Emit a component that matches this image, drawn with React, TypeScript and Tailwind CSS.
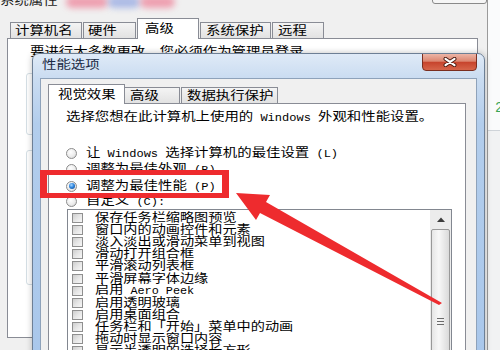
import React from "react";

const FONT = "font-['Liberation_Mono','Noto_Sans_CJK_SC',monospace]";

function Mixed({ text }: { text: string }) {
  const parts = text.split(/([\x20-\x7E]+)/).filter((p) => p.length > 0);
  return (
    <>
      {parts.map((p, i) =>
        /^[\x20-\x7E]+$/.test(p) ? (
          <span key={i} className="text-[10px]">
            {p}
          </span>
        ) : (
          <span key={i}>{p}</span>
        )
      )}
    </>
  );
}

function S({ children }: { children: React.ReactNode }) {
  return (
    <span className="inline-block origin-left translate-y-[1.4px] scale-x-[1.2] whitespace-nowrap">{children}</span>
  );
}

function Radio({ on }: { on?: boolean }) {
  return (
    <span className="flex h-[11px] w-[11px] shrink-0 items-center justify-center rounded-full border border-[#8c8c8c] bg-[radial-gradient(circle_at_40%_35%,#ffffff_0%,#ececec_55%,#cfcfcf_100%)]">
      {on && (
        <span className="h-[6px] w-[6px] rounded-full bg-[radial-gradient(circle_at_40%_35%,#a8d6ff_0%,#2f86de_45%,#0d3f82_100%)]" />
      )}
    </span>
  );
}

function Check() {
  return (
    <span className="h-[10px] w-[11px] shrink-0 border border-[#8f8f8f] bg-[linear-gradient(135deg,#cdcdcd_0%,#e6e6e6_50%,#f7f7f7_100%)]" />
  );
}

const items = [
  "保存任务栏缩略图预览",
  "窗口内的动画控件和元素",
  "淡入淡出或滑动菜单到视图",
  "滑动打开组合框",
  "平滑滚动列表框",
  "平滑屏幕字体边缘",
  "启用 Aero Peek",
  "启用透明玻璃",
  "启用桌面组合",
  "任务栏和「开始」菜单中的动画",
  "拖动时显示窗口内容",
  "显示半透明的选择长方形",
  "显示缩略图，而不是显示图标",
];

const tabOff =
  "flex h-[16px] shrink-0 items-center border border-b-0 border-[#898c95] bg-[linear-gradient(180deg,#f4f4f4,#e2e2e2)]";

export default function App() {
  return (
    <div className={`relative flex h-[350px] w-[500px] overflow-hidden bg-[#f0f0f0] text-[12px] text-black ${FONT}`}>
      {/* Back window: 系统属性 */}
      <div className="flex w-[488px] shrink-0 flex-col border-r border-[#9a9a9a]">
        <div className="flex h-[18px] shrink-0 items-start">
          <span className="mt-[-7px] leading-[16px] text-[#1d1d1d]">
            <S>系统属性</S>
          </span>
          <div className="ml-auto mt-[-10px] h-[14px] w-[55px] rounded-b-[3px] border border-[#8a8a8a] bg-[#f6f6f6]" />
        </div>
        <div className="flex h-[20px] shrink-0 items-end gap-[1px] pl-[10px] leading-[14px]">
          <div className={`${tabOff} w-[72px] pl-[4px]`}>
            <S>计算机名</S>
          </div>
          <div className={`${tabOff} w-[53px] pl-[4px]`}>
            <S>硬件</S>
          </div>
          <div className="relative z-10 mb-[-1px] flex h-[21px] w-[62px] shrink-0 items-center border border-b-0 border-[#898c95] bg-white pl-[7px]">
            <S>高级</S>
          </div>
          <div className={`${tabOff} w-[71px] pl-[5px]`}>
            <S>系统保护</S>
          </div>
          <div className={`${tabOff} w-[52px] pl-[5px]`}>
            <S>远程</S>
          </div>
        </div>
        <div className="ml-[7px] flex h-[300px] w-[471px] shrink-0 flex-col overflow-hidden border border-[#898c95] bg-white">
          <div className="shrink-0 pl-[22px] pt-[5px] leading-[16px]">
            <S>要进行大多数更改，您必须作为管理员登录。</S>
          </div>
          <div className="ml-[18px] mr-[18px] mt-[13px] h-[62px] shrink-0 rounded-[3px] border border-[#d5dfe5]" />
          <div className="ml-[18px] mr-[18px] mt-[15px] h-[135px] shrink-0 rounded-[3px] border border-[#d5dfe5]" />
        </div>
      </div>

      {/* Right edge: another window */}
      <div className="flex flex-1 flex-col bg-[#fafbfc]">
        <div className="h-[100px] shrink-0" />
        <div className="ml-[7px] h-[20px] shrink-0 text-[14px] leading-[16px] text-[#3aa657]">2</div>
        <div className="h-[10px] shrink-0" />
        <div className="flex-1 border-t border-[#cfd4d9] bg-[#f1f2f3]" />
      </div>

      {/* Watermark blur */}
      <div className="absolute left-[66px] top-[-4px] h-[12px] w-[42px] rounded-full bg-[#ee7d95] opacity-70 blur-[3px]" />
      <div className="absolute left-[108px] top-[-4px] h-[12px] w-[32px] rounded-full bg-[#7f97df] opacity-60 blur-[3px]" />
      <div className="absolute left-[140px] top-[-4px] h-[12px] w-[35px] rounded-full bg-[#ee7d95] opacity-70 blur-[3px]" />

      {/* Front dialog: 性能选项 */}
      <div className="absolute left-[32px] top-[53px] flex h-[310px] w-[453px] flex-col overflow-hidden rounded-t-[7px] border border-[#6d7f95] bg-[linear-gradient(180deg,#dfeaf7_0px,#cadcf1_24px,#b2cdec_70px,#a9c7eb_100%)] shadow-[0_0_6px_rgba(0,0,0,0.25)]">
        <div className="flex h-[24px] shrink-0 items-start">
          <span className="ml-[9px] mt-[3px] leading-[16px] text-[#1b2b45]">
            <S>性能选项</S>
          </span>
          <div className="ml-auto mr-[7px] mt-[-1px] flex h-[18px] w-[55px] items-center justify-center rounded-b-[4px] border border-[#7a2e20] bg-[linear-gradient(180deg,#ecb5a6_0%,#dc8670_45%,#c7442d_52%,#d6654a_100%)]">
            <svg width="16" height="10" viewBox="0 0 16 10">
              <path d="M3.5 1.8 L12.5 8.2 M12.5 1.8 L3.5 8.2" stroke="#4a1a10" strokeWidth="4" strokeLinecap="round" />
              <path d="M3.5 1.8 L12.5 8.2 M12.5 1.8 L3.5 8.2" stroke="#ffffff" strokeWidth="2.2" strokeLinecap="round" />
            </svg>
          </div>
        </div>
        <div className="mx-[7px] flex min-h-0 flex-1 flex-col border border-[#8ea2ba] bg-[#f0f0f0] pt-[5px]">
          <div className="flex h-[19px] shrink-0 items-end pl-[7px] leading-[14px]">
            <div className="relative z-10 mb-[-1px] flex h-[20px] w-[77px] shrink-0 items-center border border-b-0 border-[#898c95] bg-white pl-[9px]">
              <S>视觉效果</S>
            </div>
            <div className={`${tabOff} w-[55px] border-l-0 pl-[5px]`}>
              <S>高级</S>
            </div>
            <div className={`${tabOff} ml-[1px] w-[97px] pl-[5px]`}>
              <S>数据执行保护</S>
            </div>
          </div>
          <div className="ml-[7px] flex min-h-0 w-[418px] flex-1 flex-col border border-[#898c95] bg-white pt-[5px]">
            <div className="shrink-0 pl-[17px] leading-[16px]">
              <S>
                <Mixed text="选择您想在此计算机上使用的 Windows 外观和性能设置。" />
              </S>
            </div>
            <div className="mt-[19px] flex shrink-0 flex-col leading-[14px]">
              <div className="flex h-[16.5px] items-center pl-[17px]">
                <Radio />
                <span className="ml-[9px]">
                  <S>
                    <Mixed text="让 Windows 选择计算机的最佳设置 (L)" />
                  </S>
                </span>
              </div>
              <div className="flex h-[16.5px] items-center pl-[17px]">
                <Radio />
                <span className="ml-[9px]">
                  <S>
                    <Mixed text="调整为最佳外观 (B)" />
                  </S>
                </span>
              </div>
              <div className="flex h-[16px] items-center pl-[17px]">
                <Radio on />
                <span className="ml-[9px]">
                  <S>
                    <Mixed text="调整为最佳性能 (P)" />
                  </S>
                </span>
              </div>
              <div className="flex h-[15px] items-center pl-[17px]">
                <Radio />
                <span className="ml-[9px]">
                  <S>
                    <Mixed text="自定义 (C):" />
                  </S>
                </span>
              </div>
            </div>
            <div className="ml-[18px] flex min-h-0 w-[385px] flex-1 overflow-hidden border border-[#828790] bg-white">
              <div className="flex flex-1 flex-col pt-[2px] leading-[12px]">
                {items.map((t) => (
                  <div key={t} className="flex h-[12.1px] shrink-0 items-center pl-[4px]">
                    <Check />
                    <span className="ml-[12px] inline-block origin-left translate-y-[1.4px] scale-x-[1.18] whitespace-nowrap">
                      <Mixed text={t} />
                    </span>
                  </div>
                ))}
              </div>
              <div className="flex w-[21px] shrink-0 flex-col bg-[#ececec] px-[1px] pt-[1px]">
                <div className="flex h-[16px] shrink-0 items-center justify-center">
                  <svg width="8" height="5" viewBox="0 0 8 5">
                    <path d="M0 5 L4 0.5 L8 5 Z" fill="#3c3c3c" />
                  </svg>
                </div>
                <div className="mt-[2px] flex flex-1 flex-col items-center gap-[2px] rounded-[2px] border border-[#999] bg-[linear-gradient(90deg,#e6e6e6_0%,#f8f8f8_40%,#dadada_100%)] pt-[88px]">
                  <span className="h-[1px] w-[7px] shrink-0 bg-[#6b6b6b]" />
                  <span className="h-[1px] w-[7px] shrink-0 bg-[#6b6b6b]" />
                  <span className="h-[1px] w-[7px] shrink-0 bg-[#6b6b6b]" />
                </div>
              </div>
            </div>
          </div>
        </div>
      </div>

      {/* Red annotation rectangle */}
      <div className="absolute left-[40px] top-[170px] h-[28px] w-[189px] border-x-[7px] border-y-[5px] border-[#ee2b2e]" />

      {/* Red arrow */}
      <svg className="pointer-events-none absolute left-0 top-0" width="500" height="350" viewBox="0 0 500 350">
        <polygon points="236,193 270,195 266,202 442,303 439,305 260,213 256,220" fill="#ee2b2e" />
      </svg>
    </div>
  );
}
